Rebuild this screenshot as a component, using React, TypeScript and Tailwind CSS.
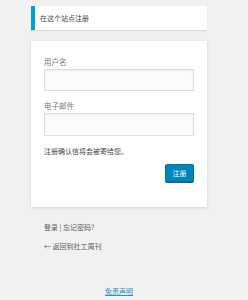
export default function App() {
  return (
    <div className="min-h-[300px] w-[248px] bg-[#f1f1f1] font-['Noto_Sans_CJK_SC',sans-serif]">
      <div className="ml-[31px] w-[176px] pt-[6px]">
        <div className="flex h-[24px] items-center border-l-4 border-[#00a0d2] bg-white pl-[5px] text-[7px] text-[#444] shadow-[0_1px_1px_rgba(0,0,0,0.1)]">
          在这个站点注册
        </div>
        <form className="mt-[11px] bg-white px-[13px] pt-[16px] pb-[25px] shadow-[0_1px_3px_rgba(0,0,0,0.13)]">
          <label className="block h-[10px] text-[7.5px] leading-[10px] text-[#72777c]">用户名</label>
          <div className="mt-[2px] h-[22px] w-[150px] border border-[#ddd] bg-[#fbfbfb] shadow-[inset_0_1px_2px_rgba(0,0,0,0.07)]" />
          <label className="mt-[10px] block h-[10px] text-[7.5px] leading-[10px] text-[#72777c]">电子邮件</label>
          <div className="mt-[2px] h-[23px] w-[150px] border border-[#ddd] bg-[#fbfbfb] shadow-[inset_0_1px_2px_rgba(0,0,0,0.07)]" />
          <p className="mt-[10px] h-[10px] text-[7px] leading-[10px] text-[#444]">注册确认信将会被寄给您。</p>
          <div className="mt-[8px] flex w-[150px] justify-end">
            <button
              type="button"
              className="flex h-[18px] w-[29px] items-center justify-center rounded-[2px] border border-[#0073aa] bg-[#0085ba] text-[7px] text-white shadow-[0_1px_0_#006799]"
            >
              注册
            </button>
          </div>
        </form>
        <div className="pl-[13px]">
          <p className="mt-[15px] h-[10px] text-[7px] leading-[10px] text-[#555d66]">登录 | 忘记密码?</p>
          <p className="mt-[9px] h-[10px] text-[7px] leading-[10px] text-[#555d66]">← 返回到社工周刊</p>
        </div>
      </div>
      <div className="mt-[35px] flex justify-center pr-[10px]">
        <a className="text-[7px] leading-[10px] text-[#2e8fc4] underline">免责声明</a>
      </div>
    </div>
  );
}
